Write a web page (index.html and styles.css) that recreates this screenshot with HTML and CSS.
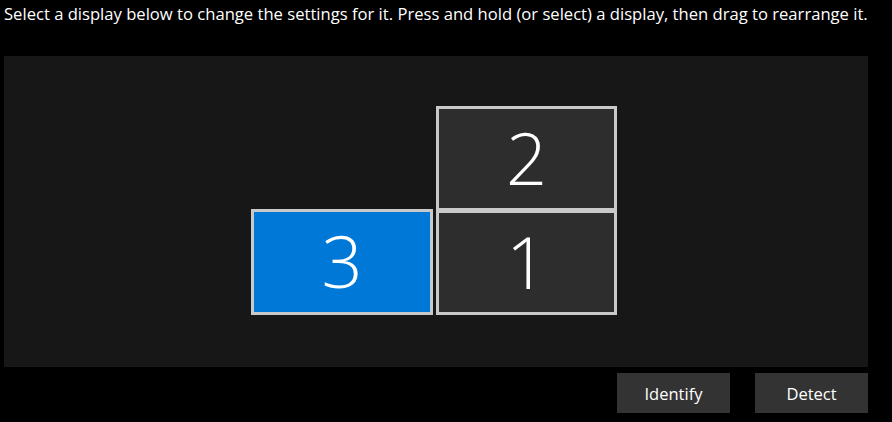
FILE: index.html
```html
<!DOCTYPE html>
<html>
<head>
<meta charset="utf-8">
<link rel="stylesheet" href="styles.css">
</head>
<body>
<div class="page">
  <p class="intro">Select a display below to change the settings for it. Press and hold (or select) a display, then drag to rearrange it.</p>
  <div class="canvas">
    <div class="display d2"><span>2</span></div>
    <div class="display d1"><span>1</span></div>
    <div class="display d3 selected"><span>3</span></div>
  </div>
  <div class="actions">
    <button class="btn">Identify</button>
    <button class="btn">Detect</button>
  </div>
</div>
</body>
</html>
```

FILE: styles.css
```css
html, body {
  margin: 0;
  padding: 0;
  background: #000;
  width: 892px;
  height: 422px;
  overflow: hidden;
}
.page {
  padding-left: 4px;
  width: 864px;
}
.intro {
  margin: 0;
  padding-top: 3px;
  height: 56px;
  box-sizing: border-box;
  color: #fff;
  font-family: "Open Sans", "Liberation Sans", sans-serif;
  font-size: 16.62px;
  line-height: 22px;
  white-space: nowrap;
}
.canvas {
  position: relative;
  width: 864px;
  height: 311px;
  background: #171717;
}
.display {
  position: absolute;
  box-sizing: border-box;
  border: 3px solid #c9c9c9;
  background: #2d2d2d;
  display: flex;
  align-items: center;
  justify-content: center;
  color: #fff;
  font-family: "Open Sans", "Liberation Sans", sans-serif;
  font-weight: 300;
  font-size: 72px;
  line-height: 1;
}
.display span {
  display: block;
  margin-top: -4px;
}
.d2 { left: 432px; top: 50px; width: 181px; height: 105px; }
.d1 { left: 432px; top: 154px; width: 181px; height: 105px; }
.d3 { left: 247px; top: 153px; width: 182px; height: 106px; }
.selected { background: #0078d7; }
.actions {
  display: flex;
  justify-content: flex-end;
  gap: 25px;
  margin-top: 6px;
}
.btn {
  width: 113px;
  height: 40px;
  border: none;
  background: #333333;
  color: #fff;
  font-family: "Open Sans", "Liberation Sans", sans-serif;
  font-size: 16.5px;
  padding: 0;
  margin: 0;
}
```
